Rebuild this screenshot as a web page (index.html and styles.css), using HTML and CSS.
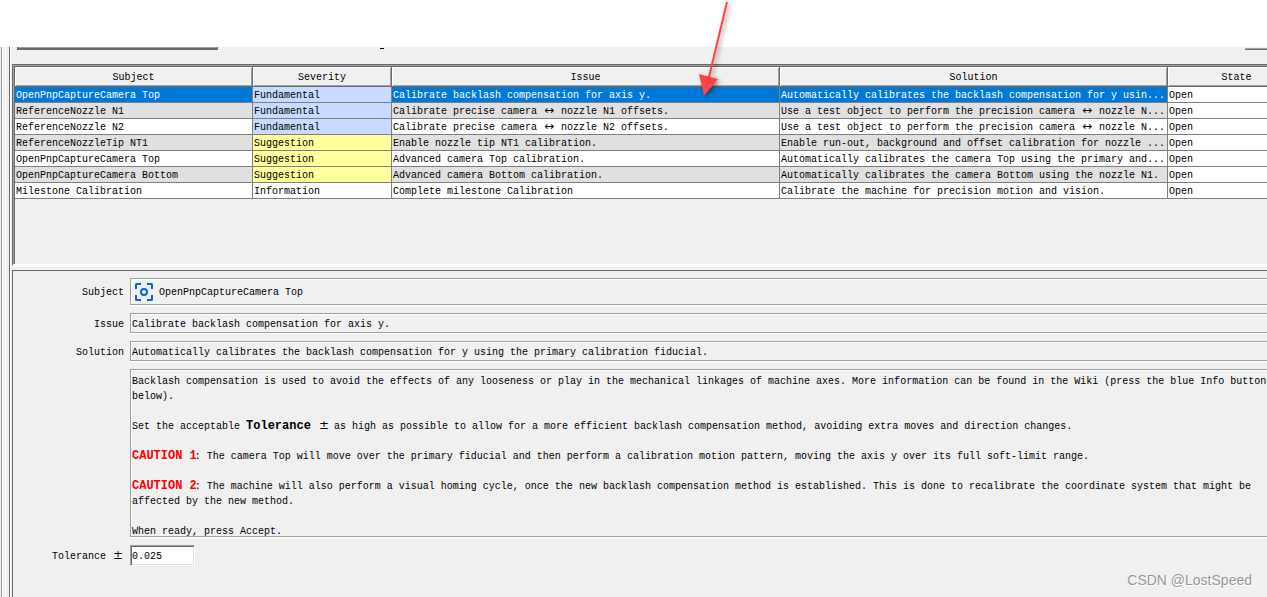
FILE: index.html
```html
<!DOCTYPE html>
<html lang="en">
<head>
<meta charset="utf-8">
<title>Issues and Solutions</title>
<link rel="stylesheet" href="styles.css">
</head>
<body>
<div class="window">
  <div class="divider"></div>
  <main class="panel">
    <div class="toolbar">
      <span class="toolbar-box"></span>
      <span class="toolbar-mark"></span>
      <span class="toolbar-button"></span>
    </div>
    <section class="table-pane">
      <table class="issues">
        <colgroup><col class="c-subject"><col class="c-severity"><col class="c-text"><col class="c-text"><col></colgroup>
        <thead>
          <tr><th>Subject</th><th>Severity</th><th>Issue</th><th>Solution</th><th class="state">State</th></tr>
        </thead>
        <tbody>
          <tr class="selected"><td>OpenPnpCaptureCamera Top</td><td class="fundamental">Fundamental</td><td>Calibrate backlash compensation for axis y.</td><td>Automatically calibrates the backlash compensation for y usin...</td><td class="open">Open</td></tr>
          <tr class="odd"><td>ReferenceNozzle N1</td><td class="fundamental">Fundamental</td><td>Calibrate precise camera <span class="wide">↔</span> nozzle N1 offsets.</td><td>Use a test object to perform the precision camera <span class="wide">↔</span> nozzle N...</td><td class="open">Open</td></tr>
          <tr><td>ReferenceNozzle N2</td><td class="fundamental">Fundamental</td><td>Calibrate precise camera <span class="wide">↔</span> nozzle N2 offsets.</td><td>Use a test object to perform the precision camera <span class="wide">↔</span> nozzle N...</td><td class="open">Open</td></tr>
          <tr class="odd"><td>ReferenceNozzleTip NT1</td><td class="suggestion">Suggestion</td><td>Enable nozzle tip NT1 calibration.</td><td>Enable run-out, background and offset calibration for nozzle ...</td><td class="open">Open</td></tr>
          <tr><td>OpenPnpCaptureCamera Top</td><td class="suggestion">Suggestion</td><td>Advanced camera Top calibration.</td><td>Automatically calibrates the camera Top using the primary and...</td><td class="open">Open</td></tr>
          <tr class="odd"><td>OpenPnpCaptureCamera Bottom</td><td class="suggestion">Suggestion</td><td>Advanced camera Bottom calibration.</td><td>Automatically calibrates the camera Bottom using the nozzle N1.</td><td class="open">Open</td></tr>
          <tr><td>Milestone Calibration</td><td>Information</td><td>Complete milestone Calibration</td><td>Calibrate the machine for precision motion and vision.</td><td class="open">Open</td></tr>
        </tbody>
      </table>
    </section>
    <section class="details">
      <span class="label">Subject</span>
      <div class="field subject">
        <svg class="icon" width="20" height="20" viewBox="0 0 20 20" fill="none" stroke="#0a63dc" stroke-width="2">
          <path d="M2 7V2.500Q2 2 2.500 2H7M13 2H17.500Q18 2 18 2.500V7M18 13V17.500Q18 18 17.500 18H13M7 18H2.500Q2 18 2 17.500V13"/>
          <circle cx="10" cy="10" r="3"/>
        </svg>
        <span>OpenPnpCaptureCamera Top</span>
      </div>
      <span class="label">Issue</span>
      <div class="field">Calibrate backlash compensation for axis y.</div>
      <span class="label">Solution</span>
      <div class="field">Automatically calibrates the backlash compensation for y using the primary calibration fiducial.</div>
      <div class="field description">
        <p>Backlash compensation is used to avoid the effects of any looseness or play in the mechanical linkages of machine axes. More information can be found in the Wiki (press the blue Info button<br>below).</p>
        <p>Set the acceptable <b>Tolerance <span class="wide">±</span></b> as high as possible to allow for a more efficient backlash compensation method, avoiding extra moves and direction changes.</p>
        <p><b class="caution">CAUTION 1</b>: The camera Top will move over the primary fiducial and then perform a calibration motion pattern, moving the axis y over its full soft-limit range.</p>
        <p><b class="caution">CAUTION 2</b>: The machine will also perform a visual homing cycle, once the new backlash compensation method is established. This is done to recalibrate the coordinate system that might be<br>affected by the new method.</p>
        <p>When ready, press Accept.</p>
      </div>
      <label class="label" for="tolerance">Tolerance <span class="wide">±</span></label>
      <input class="tolerance" id="tolerance" type="text" value="0.025">
    </section>
  </main>
</div>
<svg class="arrow" width="50" height="110" viewBox="0 0 50 110">
  <path d="M37 2L19 77" stroke="#ff4444" stroke-width="2" fill="none"/>
  <path d="M9 74L28 79L14 96Z" fill="#ff4444"/>
</svg>
<div class="watermark">CSDN @LostSpeed</div>
</body>
</html>
```

FILE: styles.css
```css
* {
  box-sizing: border-box;
}

body {
  margin: 0;
  background: #fff;
  color: #000;
  font: 10px/15px "Liberation Mono", monospace;
  overflow: hidden;
}

.window {
  display: flex;
  min-height: 100vh;
  border-top: 47px solid #fff;
  background: #f0f0f0;
}

.divider {
  flex: none;
  width: 11px;
  background: linear-gradient(to right,
    #ebe8f0 1px, #a0a0a0 1px 2px, #fff 2px 3px, #f0f0f0 3px 5px,
    #fff 5px 6px, #f0f0f0 6px 9px, #696969 9px 10px, #fff 10px);
}

.panel {
  display: flex;
  flex: 1;
  flex-direction: column;
  min-width: 0;
  padding-left: 1px;
}

.toolbar {
  display: flex;
  height: 17px;
  padding-left: 5px;
}

.toolbar-box {
  width: 201px;
  height: 3px;
  border: solid #696969;
  border-width: 0 1px 2px;
  background: #a0a0a0;
}

.toolbar-mark {
  width: 4px;
  height: 2px;
  margin-left: 162px;
  border-bottom: 1px solid #000;
}

.toolbar-button {
  width: 22px;
  height: 3px;
  margin-left: auto;
  border-top: 1px solid #f0f0f0;
  border-bottom: 1px solid #696969;
  background: #a0a0a0;
}

.table-pane {
  min-height: 203px;
  padding: 2px 0 0 2px;
  border: solid #696969;
  border-width: 1px 0 0 1px;
  border-bottom: 3px solid #fff;
  box-shadow: inset 1px 1px #a0a0a0, inset 2px 2px #696969;
}

.issues {
  width: 100%;
  table-layout: fixed;
  border-collapse: separate;
  border-spacing: 0;
  white-space: nowrap;
}

.c-subject {
  width: 238px;
}

.c-severity {
  width: 139px;
}

.c-text {
  width: 388px;
}

.issues th {
  height: 20px;
  padding: 1px 0 0;
  border: solid #696969;
  border-width: 0 1px 1px 0;
  box-shadow: inset 1px 1px #fff, inset -1px -1px #a0a0a0;
  font-weight: normal;
}

.issues .state {
  padding-left: 38px;
  border-right: 0;
  box-shadow: inset 1px 1px #fff, inset 0 -1px #a0a0a0;
}

.issues td {
  height: 16px;
  padding: 2px 0 0 1px;
  border: solid #808080;
  border-width: 0 1px 1px 0;
  background: #fff;
  line-height: 13px;
  overflow: hidden;
}

.issues .odd td {
  background: #e0e0e0;
}

.issues .selected td {
  background: #0078d7;
  color: #fff;
}

.issues tr .fundamental {
  background: #c6dbff !important;
  color: #000 !important;
}

.issues tr .suggestion {
  background: #ffff9c !important;
}

.issues tr .open {
  border-right: 0;
  background: #fff !important;
  color: #000 !important;
}

.wide {
  display: inline-block;
  width: 12px;
  font-family: "DejaVu Sans", sans-serif;
  font-size: 12px;
  font-weight: normal;
  line-height: 10px;
  text-align: center;
}

.details {
  display: grid;
  flex: 1;
  grid-template-columns: 111px 1fr;
  align-content: start;
  align-items: center;
  gap: 7px 6px;
  margin-top: 3px;
  padding-top: 7px;
  border: solid #696969;
  border-width: 1px 0 0 1px;
  white-space: nowrap;
}

.label {
  padding-top: 1px;
  text-align: right;
}

.field {
  min-width: 0;
  height: 20px;
  margin-bottom: 1px;
  padding: 3px 0 0 1px;
  border: solid #a0a0a0;
  border-width: 1px 0 1px 1px;
  box-shadow: inset 1px 1px #fff, 0 1px #fff;
}

.subject {
  display: flex;
  align-items: center;
  gap: 5px;
  height: 27px;
  padding: 1px 0 0 3px;
}

.description {
  grid-column: 2;
  height: 168px;
  padding-top: 4px;
  overflow: hidden;
}

.description p {
  margin: 0 0 15px;
}

.description b {
  margin-right: -2px;
  font-size: 12px;
  line-height: 10px;
}

.caution {
  color: #f00;
}

.tolerance {
  width: 65px;
  height: 21px;
  padding: 1px 1px 0;
  border: 1px solid;
  border-color: #a0a0a0 #fff #fff #a0a0a0;
  background: #fff;
  box-shadow: inset 1px 1px #696969, inset -1px -1px #e3e3e3;
  color: #000;
  font: inherit;
}

.arrow {
  position: absolute;
  top: 0;
  left: 690px;
  filter: drop-shadow(2px 2px 2px rgba(0, 0, 0, 0.4));
}

.watermark {
  position: absolute;
  right: 15px;
  bottom: 8px;
  color: #999;
  font: 14px/18px "Liberation Sans", sans-serif;
  text-shadow: 1px 1px #fff;
}
```
